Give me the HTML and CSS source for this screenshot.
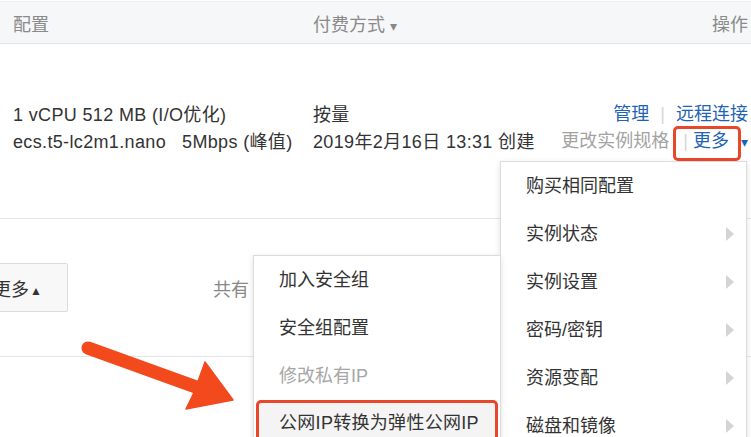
FILE: index.html
```html
<!DOCTYPE html>
<html lang="zh-CN">
<head>
    <meta charset="UTF-8">
    <title>实例列表</title>
    <link rel="stylesheet" href="styles.css">
</head>
<body>
    <div class="page">
        <div class="thead">
            <div class="col col-config">配置</div>
            <div class="col col-pay">付费方式 <span class="caret">▾</span></div>
            <div class="col col-ops">操作</div>
        </div>

        <div class="trow">
            <div class="col col-config">
                <p>1 vCPU 512 MB (I/O优化)</p>
                <p>ecs.t5-lc2m1.nano<span class="gap"></span>5Mbps (峰值)</p>
            </div>
            <div class="col col-pay">
                <p>按量</p>
                <p>2019年2月16日 13:31 创建</p>
            </div>
            <div class="col col-ops">
                <p><a class="link">管理</a><span class="sep">|</span><a class="link">远程连接</a></p>
                <p><span class="muted">更改实例规格</span><span class="sep sep-more">|</span><a class="link">更多</a><span class="caret blue">▾</span></p>
            </div>
        </div>

        <div class="tfoot">
            <button class="more-btn">更多<span class="up">▲</span></button>
            <span class="total">共有</span>
        </div>
    </div>

    <!-- annotation over the screenshot -->
    <div class="mark mark-more"></div>

    <ul class="menu menu-main">
        <li>购买相同配置</li>
        <li class="sub">实例状态</li>
        <li class="sub">实例设置</li>
        <li class="sub">密码/密钥</li>
        <li class="sub">资源变配</li>
        <li class="sub">磁盘和镜像</li>
    </ul>

    <ul class="menu menu-net">
        <li>加入安全组</li>
        <li>安全组配置</li>
        <li class="disabled">修改私有IP</li>
        <li class="active">公网IP转换为弹性公网IP<span class="cut">专有网络</span></li>
    </ul>

    <svg class="arrow" width="250" height="90" viewBox="0 0 250 90">
        <path d="M90 12.5 L198 51.5 L205 32 L233 70 L186 79 L194 62.5 L86 23.5 A5.8 5.8 0 0 1 90 12.5 Z" fill="#f34a1d" stroke="#f34a1d" stroke-width="1.5" stroke-linejoin="round"/>
    </svg>
</body>
</html>
```

FILE: styles.css
```css
* {
    box-sizing: border-box;
    margin: 0;
    padding: 0;
}

body {
    width: 751px;
    height: 437px;
    overflow: hidden;
    position: relative;
    background-color: #fff;
    color: #333;
    font-family: "Liberation Sans", "Noto Sans CJK SC", sans-serif;
    font-size: 18px;
}

.page {
    width: 751px;
}

.thead {
    display: flex;
    align-items: center;
    height: 43px;
    margin-top: 1px;
    background-color: #f6f7f9;
    border-top: 1px solid #eceef1;
    border-bottom: 1px solid #e3e5e8;
    color: #8a8a8a;
}

.col-config {
    width: 300px;
    margin-left: 13px;
}

.col-pay {
    width: 240px;
}

.col-ops {
    flex: 1;
    text-align: right;
    padding-right: 3px;
}

.caret {
    font-size: 14px;
    color: #888;
}

.caret.blue {
    color: #1f63b4;
    margin-left: 12px;
}

.trow {
    display: flex;
    align-items: flex-end;
    height: 175px;
    padding-bottom: 62px;
    border-bottom: 1px solid #e3e5e8;
}

.trow p {
    line-height: 27px;
    white-space: nowrap;
}

.trow .col-config,
.trow .col-pay {
    letter-spacing: 0.35px;
}

.gap {
    display: inline-block;
    width: 16px;
}

.link {
    color: #1f63b4;
}

.muted {
    color: #a3a3a3;
}

.sep {
    color: #d6d6d6;
    margin: 0 11px;
}

.sep-more {
    margin: 0 5px 0 14px;
}

.tfoot {
    display: flex;
    align-items: center;
    height: 138px;
    border-bottom: 1px solid #e3e5e8;
}

.more-btn {
    width: 88px;
    height: 49px;
    margin-left: -20px;
    padding-left: 12px;
    text-align: left;
    background-color: #f8f8f8;
    border: 1px solid #dcdcdc;
    border-radius: 2px;
    font-family: inherit;
    font-size: 18px;
    color: #333;
}

.more-btn .up {
    font-size: 12px;
    margin-left: 1px;
    vertical-align: 1px;
}

.total {
    margin-left: 145px;
    color: #888;
}

.mark {
    position: absolute;
    border: 3px solid #e8472a;
    border-radius: 5px;
}

.mark-more {
    left: 673px;
    top: 126px;
    width: 68px;
    height: 35px;
}

.menu {
    position: absolute;
    list-style: none;
    background-color: #fff;
    border: 1px solid #dcdcdc;
    box-shadow: 0 2px 6px rgba(0, 0, 0, 0.12);
    color: #333;
}

.menu li {
    position: relative;
    height: 48px;
    line-height: 48px;
    padding-left: 25px;
    white-space: nowrap;
}

.menu li.sub::after {
    content: "";
    position: absolute;
    right: 12px;
    top: 17px;
    border-left: 8px solid #d4d4d4;
    border-top: 7px solid transparent;
    border-bottom: 7px solid transparent;
}

.menu-main {
    left: 500px;
    top: 161px;
    width: 247px;
}

.menu-net {
    left: 253px;
    top: 255px;
    width: 248px;
}

.menu li.disabled {
    color: #a6a6a6;
}

.menu li.active {
    margin: 0 2px;
    padding-left: 20px;
    border: 3px solid #e8472a;
    border-radius: 5px;
    background-color: #f4f4f4;
    height: 70px;
    line-height: 40px;
    letter-spacing: 0.3px;
}

.cut {
    position: absolute;
    left: 125px;
    top: 30px;
    font-size: 14px;
    color: #aaa;
}

.arrow {
    position: absolute;
    left: 0;
    top: 330px;
}
```
